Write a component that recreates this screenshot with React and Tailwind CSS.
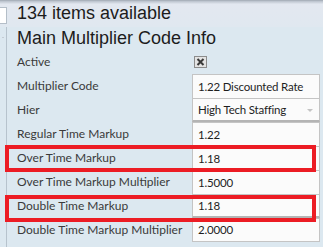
import React from "react";

const rows = [
  { label: "Multiplier Code", value: "1.22 Discounted Rate" },
  { label: "Hier", value: "High Tech Staffing", select: true },
  { label: "Regular Time Markup", value: "1.22" },
  { label: "Over Time Markup", value: "1.18" },
  { label: "Over Time Markup Multiplier", value: "1.5000" },
  { label: "Double Time Markup", value: "1.18", focus: true },
  { label: "Double Time Markup Multiplier", value: "2.0000", last: true },
];

const App = () => {
  return (
    <div
      className="relative w-[323px] h-[247px] overflow-hidden bg-[#dce8f0] flex flex-col"
      style={{ fontFamily: "Lato, 'Open Sans', sans-serif" }}
    >
      {/* header band */}
      <div className="h-[27px] flex bg-gradient-to-b from-[#b9c1cb] via-[#e3e8f0] via-[12%] to-[#e0e8f0] border-t border-[#aab2bc]">
        <div className="w-[7px] h-[17px] mt-[6px] bg-white border-y border-r border-[#b4bec8]" />
        <div
          className="ml-[10px] pt-[1px] leading-[22px] text-[18px] text-[#1c1c1c]"
          style={{ fontFamily: "'Liberation Sans', Arial, sans-serif" }}
        >
          134 items available
        </div>
      </div>

      <div className="flex flex-1">
        <div className="w-[7px] border-r border-[#b7c3cd] relative">
          <div className="absolute left-[2px] top-[10px] w-[2px] h-px bg-[#c4ccd4]" />
        </div>
        <div className="flex flex-col pl-[10px]">
          <div
            className="h-[23px] pt-[1px] leading-[21px] text-[18px] text-[#1c1c1c]"
            style={{ fontFamily: "'Liberation Sans', Arial, sans-serif" }}
          >
            Main Multiplier Code Info
          </div>

          <div className="flex h-[24px] items-center">
            <div className="w-[176px] text-[12px] text-[#3a3a3a]">Active</div>
            <div className="w-[13px] h-[12px] border border-[#8c8c8c] bg-[#e4e4e4] flex items-center justify-center ml-px">
              <svg width="9" height="8" viewBox="0 0 9 8">
                <path d="M1.5 1 L7.5 7 M7.5 1 L1.5 7" stroke="#3a3a3a" strokeWidth="2" />
              </svg>
            </div>
          </div>

          {rows.map((r) => (
            <div key={r.label} className="flex h-[24px]">
              <div className="w-[175px] flex items-center text-[12px] text-[#3a3a3a] whitespace-nowrap">
                {r.label}
              </div>
              <div
                className={`w-[128px] flex items-center border-x border-t border-[#c4c4c4] bg-[#fbfbfb] pl-[5px] text-[11.5px] tracking-[-0.2px] text-[#1e1e1e] whitespace-nowrap relative ${
                  r.last ? "border-b" : ""
                } ${r.select || r.focus ? "border-b-2 border-b-[#b4b4b4]" : ""}`}
              >
                {r.value}
                {r.select && (
                  <div className="absolute right-[6px] top-[10px] w-0 h-0 border-l-[3px] border-r-[3px] border-t-[3px] border-l-transparent border-r-transparent border-t-[#c4c4c4]" />
                )}
              </div>
            </div>
          ))}
        </div>
      </div>

      {/* red annotation boxes */}
      <div className="absolute left-[5px] top-[145px] w-[311px] h-[27px] border-4 border-[#ec1c24]" />
      <div className="absolute left-[5px] top-[195px] w-[311px] h-[27px] border-4 border-[#ec1c24]" />
    </div>
  );
};

export default App;
